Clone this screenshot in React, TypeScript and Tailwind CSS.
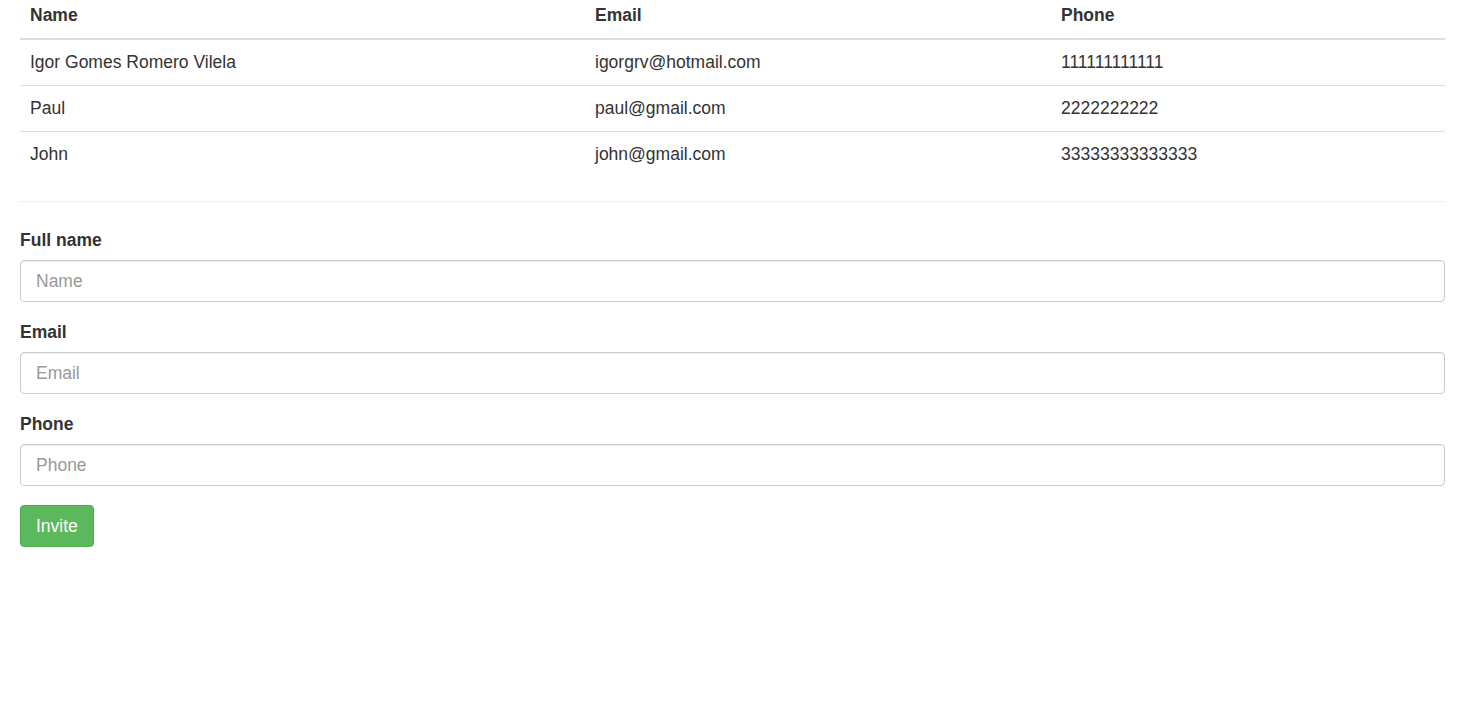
import { useState } from "react";

const people = [
  { name: "Igor Gomes Romero Vilela", email: "igorgrv@hotmail.com", phone: "111111111111" },
  { name: "Paul", email: "paul@gmail.com", phone: "2222222222" },
  { name: "John", email: "john@gmail.com", phone: "33333333333333" },
];

export default function App() {
  const [form, setForm] = useState({ name: "", email: "", phone: "" });
  const cols = "grid grid-cols-[565px_466px_1fr]";
  return (
    <main className="min-h-screen bg-white pl-[20px] pr-[26px] text-[17.5px] leading-[23px] text-[#333] font-['Liberation_Sans',Arial,sans-serif]">
      {/* table */}
      <div className="mb-[24px]">
        <div className={`${cols} h-[40px] border-b-2 border-[#ddd] pt-[4px] font-bold`}>
          <div className="px-[10px]">Name</div>
          <div className="px-[10px]">Email</div>
          <div className="px-[10px]">Phone</div>
        </div>
        {people.map((p, id) => (
          <div
            key={id}
            className={`${cols} items-center ${id === 0 ? "h-[45px]" : "h-[46px] border-t border-[#ddd]"}`}
          >
            <div className="px-[10px]">{p.name}</div>
            <div className="px-[10px]">{p.email}</div>
            <div className="px-[10px]">{p.phone}</div>
          </div>
        ))}
      </div>
      <hr className="border-0 border-t border-[#eee]" />

      {/* form */}
      <form className="pt-[27px]" onSubmit={(e) => e.preventDefault()}>
        {[
          { key: "name", label: "Full name", ph: "Name", type: "text" },
          { key: "email", label: "Email", ph: "Email", type: "email" },
          { key: "phone", label: "Phone", ph: "Phone", type: "text" },
        ].map((f) => (
          <div key={f.key} className="mb-[19px]">
            <label className="block font-bold mb-[8px]">{f.label}</label>
            <input
              type={f.type}
              placeholder={f.ph}
              value={(form as any)[f.key]}
              onChange={(e) => setForm({ ...form, [f.key]: e.target.value })}
              className="block w-full h-[42px] px-[15px] rounded-[4px] border border-[#ccc] shadow-[inset_0_1px_1px_rgba(0,0,0,0.075)] text-[#555] placeholder:text-[#999] outline-none"
            />
          </div>
        ))}
        <button
          type="submit"
          className="h-[42px] px-[15px] rounded-[4px] bg-[#5cb85c] border border-[#4cae4c] text-white"
        >
          Invite
        </button>
      </form>
    </main>
  );
}
